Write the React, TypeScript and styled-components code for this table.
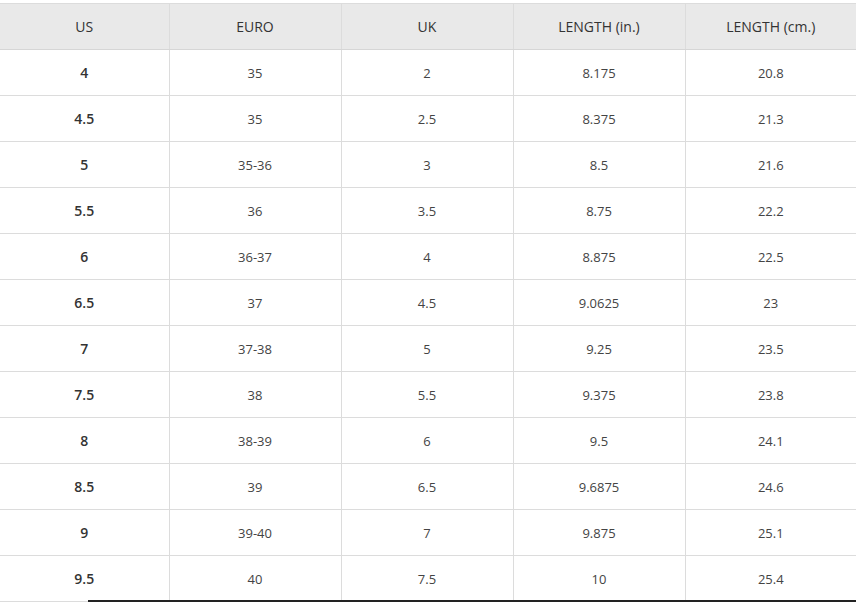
import React from "react";
import styled, { createGlobalStyle } from "styled-components";

const GlobalStyle = createGlobalStyle`
  html, body {
    margin: 0;
    padding: 0;
    background: #fff;
    font-family: "Open Sans", "Liberation Sans", sans-serif;
  }
`;

const Page = styled.div`
  width: 856px;
  padding-top: 3px;
`;

const SizeTable = styled.table`
  width: 856px;
  border-collapse: collapse;
  table-layout: fixed;
  border-top: 1px solid #dcdcdc;
`;

const Col = styled.col<{ $w: number }>`
  width: ${(p) => p.$w}px;
`;

const HeadCell = styled.th`
  height: 45px;
  padding: 0;
  background: #e9e9e9;
  color: #333;
  font-size: 14px;
  font-weight: 400;
  text-align: center;
  border-bottom: 1px solid #d6d6d6;
  border-left: 1px solid #dcdcdc;
  &:first-child {
    border-left: none;
  }
`;

const Cell = styled.td<{ $strong?: boolean }>`
  height: 45px;
  padding: 0;
  text-align: center;
  color: ${(p) => (p.$strong ? "#333" : "#444")};
  font-size: ${(p) => (p.$strong ? "14px" : "13px")};
  font-weight: ${(p) => (p.$strong ? 600 : 400)};
  border-bottom: 1px solid #dcdcdc;
  border-left: 1px solid #dcdcdc;
  &:first-child {
    border-left: none;
  }
`;

const BottomRule = styled.div`
  margin-left: 88px;
  margin-top: -2px;
  height: 2px;
  background: #222;
  position: relative;
`;

const headers = ["US", "EURO", "UK", "LENGTH (in.)", "LENGTH (cm.)"];
const widths = [169, 172, 172, 172, 171];

const rows: string[][] = [
  ["4", "35", "2", "8.175", "20.8"],
  ["4.5", "35", "2.5", "8.375", "21.3"],
  ["5", "35-36", "3", "8.5", "21.6"],
  ["5.5", "36", "3.5", "8.75", "22.2"],
  ["6", "36-37", "4", "8.875", "22.5"],
  ["6.5", "37", "4.5", "9.0625", "23"],
  ["7", "37-38", "5", "9.25", "23.5"],
  ["7.5", "38", "5.5", "9.375", "23.8"],
  ["8", "38-39", "6", "9.5", "24.1"],
  ["8.5", "39", "6.5", "9.6875", "24.6"],
  ["9", "39-40", "7", "9.875", "25.1"],
  ["9.5", "40", "7.5", "10", "25.4"],
];

const App = () => {
  return (
    <Page>
      <GlobalStyle />
      <SizeTable>
        <colgroup>
          {widths.map((w, i) => (
            <Col key={i} $w={w} />
          ))}
        </colgroup>
        <thead>
          <tr>
            {headers.map((h) => (
              <HeadCell key={h}>{h}</HeadCell>
            ))}
          </tr>
        </thead>
        <tbody>
          {rows.map((row) => (
            <tr key={row[0]}>
              {row.map((v, i) => (
                <Cell key={i} $strong={i === 0}>
                  {v}
                </Cell>
              ))}
            </tr>
          ))}
        </tbody>
      </SizeTable>
      <BottomRule />
    </Page>
  );
};

export default App;
